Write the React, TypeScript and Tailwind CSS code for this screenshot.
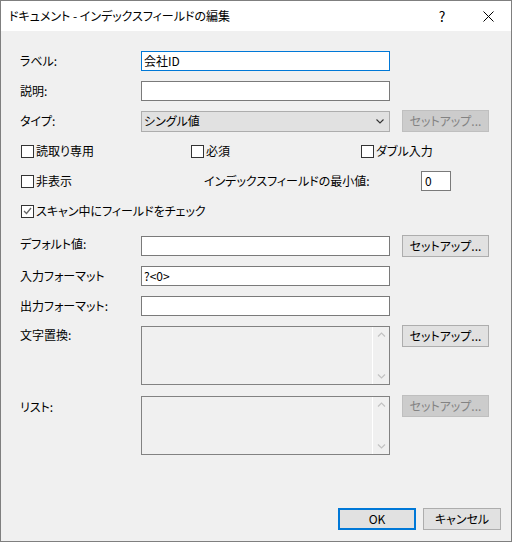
import React from "react";

const font = "font-['Meiryo_UI','Noto_Sans_CJK_JP',sans-serif] [font-feature-settings:'palt'] text-[12px] text-black";

const SetupButton = ({ disabled }: { disabled?: boolean }) => (
  <button
    className={
      disabled
        ? "w-[87px] h-[22px] bg-[#cccccc] border border-[#bfbfbf] text-[#838383] flex items-center justify-center"
        : "w-[87px] h-[22px] bg-[#e1e1e1] border border-[#adadad] text-black flex items-center justify-center"
    }>
    セットアップ...
  </button>
);

const CheckBox = ({ checked, label }: { checked?: boolean; label: string }) => (
  <div className="flex items-center">
    <span className="w-[13px] h-[13px] border border-[#333333] bg-white flex items-center justify-center">
      {checked && (
        <svg width="9" height="8" viewBox="0 0 9 8">
          <path d="M1 4 L3.5 6.5 L8 1" fill="none" stroke="#666666" strokeWidth="1.3" />
        </svg>
      )}
    </span>
    <span className="ml-[2px]">{label}</span>
  </div>
);

const TextBox = ({ value, focused }: { value?: string; focused?: boolean }) => (
  <div
    className={
      "w-[249px] h-[20px] bg-white border flex items-center px-[2px] " +
      (focused ? "border-[#0078d7]" : "border-[#7a7a7a]")
    }>
    {value}
  </div>
);

const ListBox = () => (
  <div className="w-[249px] h-[59px] border border-[#828282] bg-[#f0f0f0] flex">
    <div className="flex-1" />
    <div className="w-[17px] border-l border-white flex flex-col items-center justify-between py-[5px]">
      <svg width="9" height="5" viewBox="0 0 9 5">
        <path d="M1 4.5 L4.5 1 L8 4.5" fill="none" stroke="#c2c2c2" strokeWidth="1.2" />
      </svg>
      <svg width="9" height="5" viewBox="0 0 9 5">
        <path d="M1 0.5 L4.5 4 L8 0.5" fill="none" stroke="#c2c2c2" strokeWidth="1.2" />
      </svg>
    </div>
  </div>
);

export default function App() {
  return (
    <div className={"w-[512px] h-[542px] border border-[#7f7f7f] bg-[#f0f0f0] flex flex-col " + font}>
      {/* title bar */}
      <div className="h-[30px] bg-white flex items-center shrink-0">
        <span className="pl-[8px] flex-1">ドキュメント - インデックスフィールドの編集</span>
        <div className="w-[46px] h-full flex items-center justify-center text-[14px]">?</div>
        <div className="w-[46px] h-full flex items-center justify-center">
          <svg width="11" height="11" viewBox="0 0 11 11">
            <path d="M0.5 0.5 L10.5 10.5 M10.5 0.5 L0.5 10.5" stroke="#000" strokeWidth="1" />
          </svg>
        </div>
      </div>

      <div className="flex-1 flex flex-col pt-[20px] pl-[19px]">
        <div className="flex items-center h-[20px]">
          <span className="w-[121px]">ラベル:</span>
          <TextBox value="会社ID" focused />
        </div>
        <div className="flex items-center h-[20px] mt-[10px]">
          <span className="w-[121px]">説明:</span>
          <TextBox />
        </div>
        <div className="flex items-center h-[22px] mt-[9px]">
          <span className="w-[121px]">タイプ:</span>
          <div className="w-[249px] h-[21px] bg-[#e1e1e1] border border-[#adadad] flex items-center pl-[2px] pr-[5px]">
            <span className="flex-1">シングル値</span>
            <svg width="8" height="5" viewBox="0 0 8 5">
              <path d="M0.5 0.5 L4 4 L7.5 0.5" fill="none" stroke="#333" strokeWidth="1.1" />
            </svg>
          </div>
          <div className="ml-[12px]">
            <SetupButton disabled />
          </div>
        </div>

        <div className="flex items-center h-[20px] mt-[9px] pl-[1px]">
          <div className="w-[170px]">
            <CheckBox label="読取り専用" />
          </div>
          <div className="w-[170px]">
            <CheckBox label="必須" />
          </div>
          <CheckBox label="ダブル入力" />
        </div>
        <div className="flex items-center h-[20px] mt-[10px] pl-[1px]">
          <div className="w-[183px]">
            <CheckBox label="非表示" />
          </div>
          <span className="w-[217px]">インデックスフィールドの最小値:</span>
          <div className="w-[30px] h-[20px] bg-white border border-[#7a7a7a] flex items-center px-[3px]">0</div>
        </div>
        <div className="flex items-center h-[20px] mt-[10px] pl-[1px]">
          <CheckBox checked label="スキャン中にフィールドをチェック" />
        </div>

        <div className="flex items-center h-[22px] mt-[14px]">
          <span className="w-[121px] self-start">デフォルト値:</span>
          <TextBox />
          <div className="ml-[12px]">
            <SetupButton />
          </div>
        </div>
        <div className="flex items-center h-[20px] mt-[9px]">
          <span className="w-[121px]">入力フォーマット</span>
          <TextBox value="?<0>" />
        </div>
        <div className="flex items-center h-[20px] mt-[10px]">
          <span className="w-[121px]">出力フォーマット:</span>
          <TextBox />
        </div>
        <div className="flex items-start mt-[9px]">
          <span className="w-[121px] pt-[1px]">文字置換:</span>
          <div className="mt-[1px]">
            <ListBox />
          </div>
          <div className="ml-[12px]">
            <SetupButton />
          </div>
        </div>
        <div className="flex items-start mt-[10px]">
          <span className="w-[121px] pt-[3px]">リスト:</span>
          <div className="mt-[1px]">
            <ListBox />
          </div>
          <div className="ml-[12px]">
            <SetupButton disabled />
          </div>
        </div>

        <div className="flex-1" />
        <div className="flex justify-end gap-[7px] pr-[10px] pb-[11px]">
          <button className="w-[78px] h-[22px] bg-[#e1e1e1] border-2 border-[#0078d7]">OK</button>
          <button className="w-[78px] h-[22px] bg-[#e1e1e1] border border-[#adadad]">キャンセル</button>
        </div>
      </div>
    </div>
  );
}
